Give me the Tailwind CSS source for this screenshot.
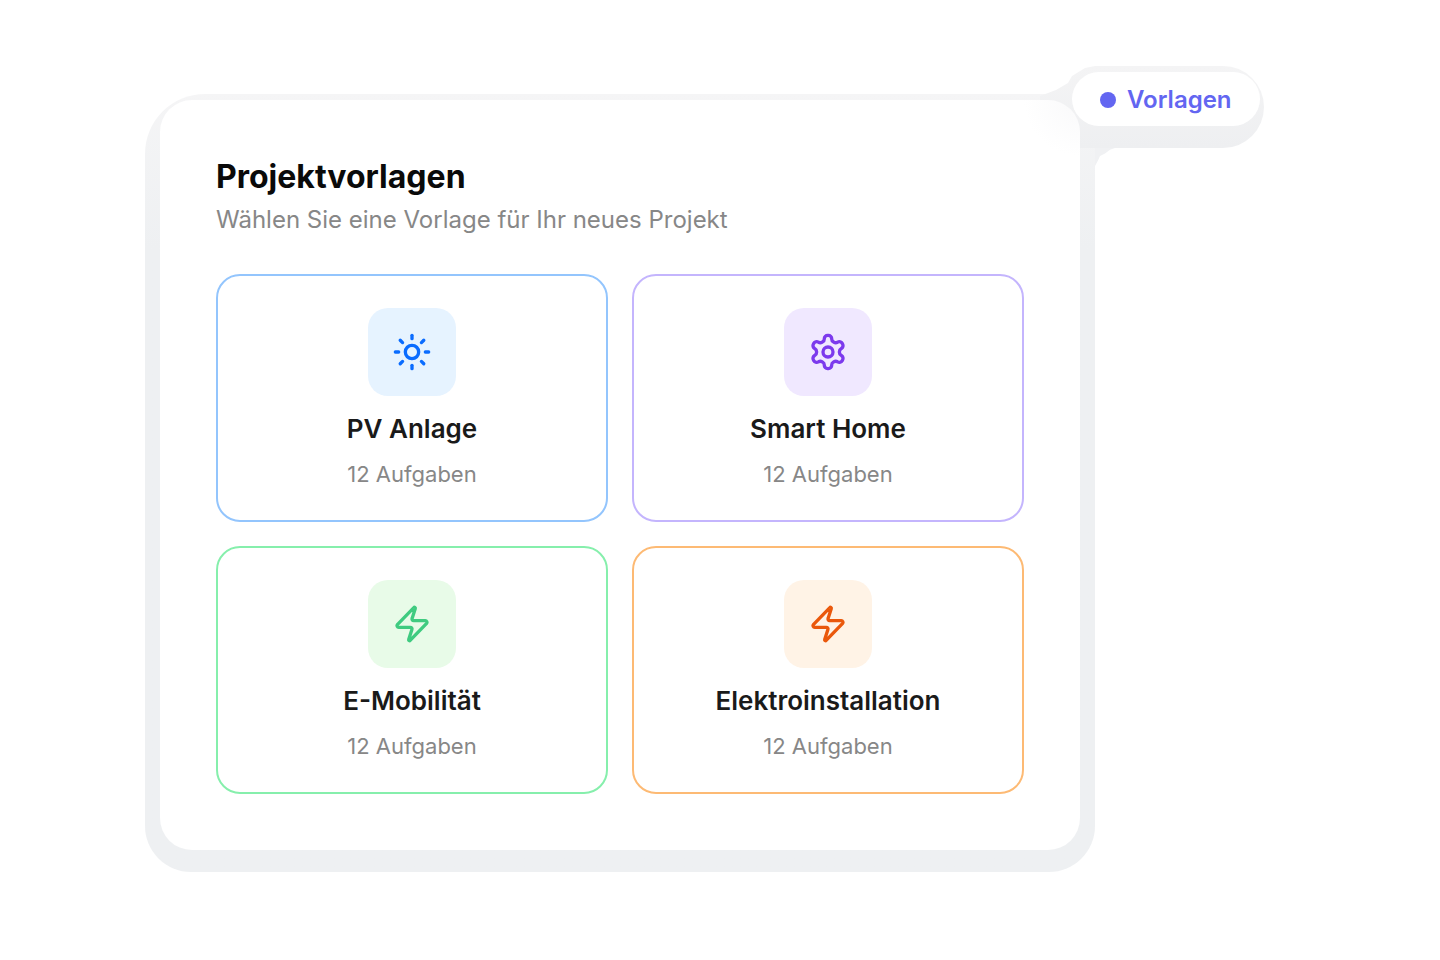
<!DOCTYPE html>
<html lang="de">
<head>
    <meta charset="UTF-8">
    <title>Projektvorlagen</title>
    <script src="https://cdn.jsdelivr.net/npm/@tailwindcss/browser@4"></script>
</head>
<body class="bg-white font-['Inter',sans-serif]">
    <div class="w-[1440px] h-[960px] pt-[100px] pl-[160px] overflow-hidden">
        <div class="relative w-[920px] h-[750px]">
            <!-- grey backing behind card and pill -->
            <div class="absolute left-[-15px] top-[-6px] w-[950px] h-[778px] bg-linear-to-b from-[#f5f5f6] to-[#eef0f2] to-20% rounded-tl-[60px] rounded-tr-[46px] rounded-b-[46px]"></div>
            <div class="absolute left-[880px] top-[-34px] w-[224px] h-[82px] bg-linear-to-b from-[#f4f4f5] to-[#eeeff1] rounded-r-[41px] [clip-path:polygon(0_30px,16px_24px,28px_17px,32px_10px,45px_2px,55px_0,100%_0,100%_100%,0_100%)]"></div>
            <div class="absolute left-[935px] top-[48px] w-5 h-[18px] bg-[#f0f1f3] [clip-path:polygon(0_0,100%_0,75%_10%,50%_30%,25%_45%,15%_70%,0_100%)]"></div>

            <div class="relative h-full bg-[radial-gradient(circle_at_100%_0,#f9f9fa,#ffffff_56px)] rounded-[32px] p-14">
                <h1 class="text-[32px] leading-[42px] font-bold text-[#0a0a0a]">Projektvorlagen</h1>
                <p class="mt-[2px] text-2xl leading-[40px] text-[#878787]">Wählen Sie eine Vorlage für Ihr neues Projekt</p>
                <div class="mt-[34px] grid grid-cols-2 gap-6">
                    <div class="h-[248px] bg-white border-2 border-[#93c5fd] rounded-3xl pt-8 flex flex-col items-center">
                        <div class="w-[88px] h-[88px] rounded-[20px] bg-[#e6f3ff] flex items-center justify-center">
                            <svg class="w-10 h-10 text-[#0a6cff]" viewBox="0 0 24 24" fill="none" stroke="currentColor" stroke-width="2" stroke-linecap="round" stroke-linejoin="round"><circle cx="12" cy="12" r="4"/><path d="M12 2v2"/><path d="M12 20v2"/><path d="m4.93 4.93 1.41 1.41"/><path d="m17.66 17.66 1.41 1.41"/><path d="M2 12h2"/><path d="M20 12h2"/><path d="m6.34 17.66-1.41 1.41"/><path d="m19.07 4.93-1.41 1.41"/></svg>
                        </div>
                        <h3 class="mt-4 text-[26px] leading-[34px] font-semibold text-[#1a1a1a]">PV Anlage</h3>
                        <p class="mt-[11px] text-[22px] leading-[34px] text-[#878787]">12 Aufgaben</p>
                    </div>
                    <div class="h-[248px] bg-white border-2 border-[#c4b5fd] rounded-3xl pt-8 flex flex-col items-center">
                        <div class="w-[88px] h-[88px] rounded-[20px] bg-[#f0e8ff] flex items-center justify-center">
                            <svg class="w-10 h-10 text-[#7c3aed]" viewBox="0 0 24 24" fill="none" stroke="currentColor" stroke-width="2" stroke-linecap="round" stroke-linejoin="round"><path d="M12.22 2h-.44a2 2 0 0 0-2 2v.18a2 2 0 0 1-1 1.73l-.43.25a2 2 0 0 1-2 0l-.15-.08a2 2 0 0 0-2.73.73l-.22.38a2 2 0 0 0 .73 2.73l.15.1a2 2 0 0 1 1 1.72v.51a2 2 0 0 1-1 1.74l-.15.09a2 2 0 0 0-.73 2.73l.22.38a2 2 0 0 0 2.73.73l.15-.08a2 2 0 0 1 2 0l.43.25a2 2 0 0 1 1 1.73V20a2 2 0 0 0 2 2h.44a2 2 0 0 0 2-2v-.18a2 2 0 0 1 1-1.73l.43-.25a2 2 0 0 1 2 0l.15.08a2 2 0 0 0 2.73-.73l.22-.39a2 2 0 0 0-.73-2.73l-.15-.08a2 2 0 0 1-1-1.74v-.5a2 2 0 0 1 1-1.74l.15-.09a2 2 0 0 0 .73-2.73l-.22-.38a2 2 0 0 0-2.73-.73l-.15.08a2 2 0 0 1-2 0l-.43-.25a2 2 0 0 1-1-1.73V4a2 2 0 0 0-2-2z"/><circle cx="12" cy="12" r="3"/></svg>
                        </div>
                        <h3 class="mt-4 text-[26px] leading-[34px] font-semibold text-[#1a1a1a]">Smart Home</h3>
                        <p class="mt-[11px] text-[22px] leading-[34px] text-[#878787]">12 Aufgaben</p>
                    </div>
                    <div class="h-[248px] bg-white border-2 border-[#86efac] rounded-3xl pt-8 flex flex-col items-center">
                        <div class="w-[88px] h-[88px] rounded-[20px] bg-[#e8fbe8] flex items-center justify-center">
                            <svg class="w-10 h-10 text-[#3fcb80]" viewBox="0 0 24 24" fill="none" stroke="currentColor" stroke-width="2" stroke-linecap="round" stroke-linejoin="round"><path d="M4 14a1 1 0 0 1-.78-1.63l9.9-10.2a.5.5 0 0 1 .86.46l-1.92 6.02A1 1 0 0 0 13 10h7a1 1 0 0 1 .78 1.63l-9.9 10.2a.5.5 0 0 1-.86-.46l1.92-6.02A1 1 0 0 0 11 14z"/></svg>
                        </div>
                        <h3 class="mt-4 text-[26px] leading-[34px] font-semibold text-[#1a1a1a]">E-Mobilität</h3>
                        <p class="mt-[11px] text-[22px] leading-[34px] text-[#878787]">12 Aufgaben</p>
                    </div>
                    <div class="h-[248px] bg-white border-2 border-[#fdba74] rounded-3xl pt-8 flex flex-col items-center">
                        <div class="w-[88px] h-[88px] rounded-[20px] bg-[#fff3e6] flex items-center justify-center">
                            <svg class="w-10 h-10 text-[#ea580c]" viewBox="0 0 24 24" fill="none" stroke="currentColor" stroke-width="2" stroke-linecap="round" stroke-linejoin="round"><path d="M4 14a1 1 0 0 1-.78-1.63l9.9-10.2a.5.5 0 0 1 .86.46l-1.92 6.02A1 1 0 0 0 13 10h7a1 1 0 0 1 .78 1.63l-9.9 10.2a.5.5 0 0 1-.86-.46l1.92-6.02A1 1 0 0 0 11 14z"/></svg>
                        </div>
                        <h3 class="mt-4 text-[26px] leading-[34px] font-semibold text-[#1a1a1a]">Elektroinstallation</h3>
                        <p class="mt-[11px] text-[22px] leading-[34px] text-[#878787]">12 Aufgaben</p>
                    </div>
                </div>
            </div>

            <div class="absolute left-[912px] top-[-28px] w-[188px] h-[54px] pt-[2px] bg-white rounded-full flex items-center pl-7 gap-[11px]">
                <span class="w-4 h-4 rounded-full bg-[#6366f1]"></span>
                <span class="text-2xl font-semibold text-[#6366f1]">Vorlagen</span>
            </div>
        </div>
    </div>
</body>
</html>
